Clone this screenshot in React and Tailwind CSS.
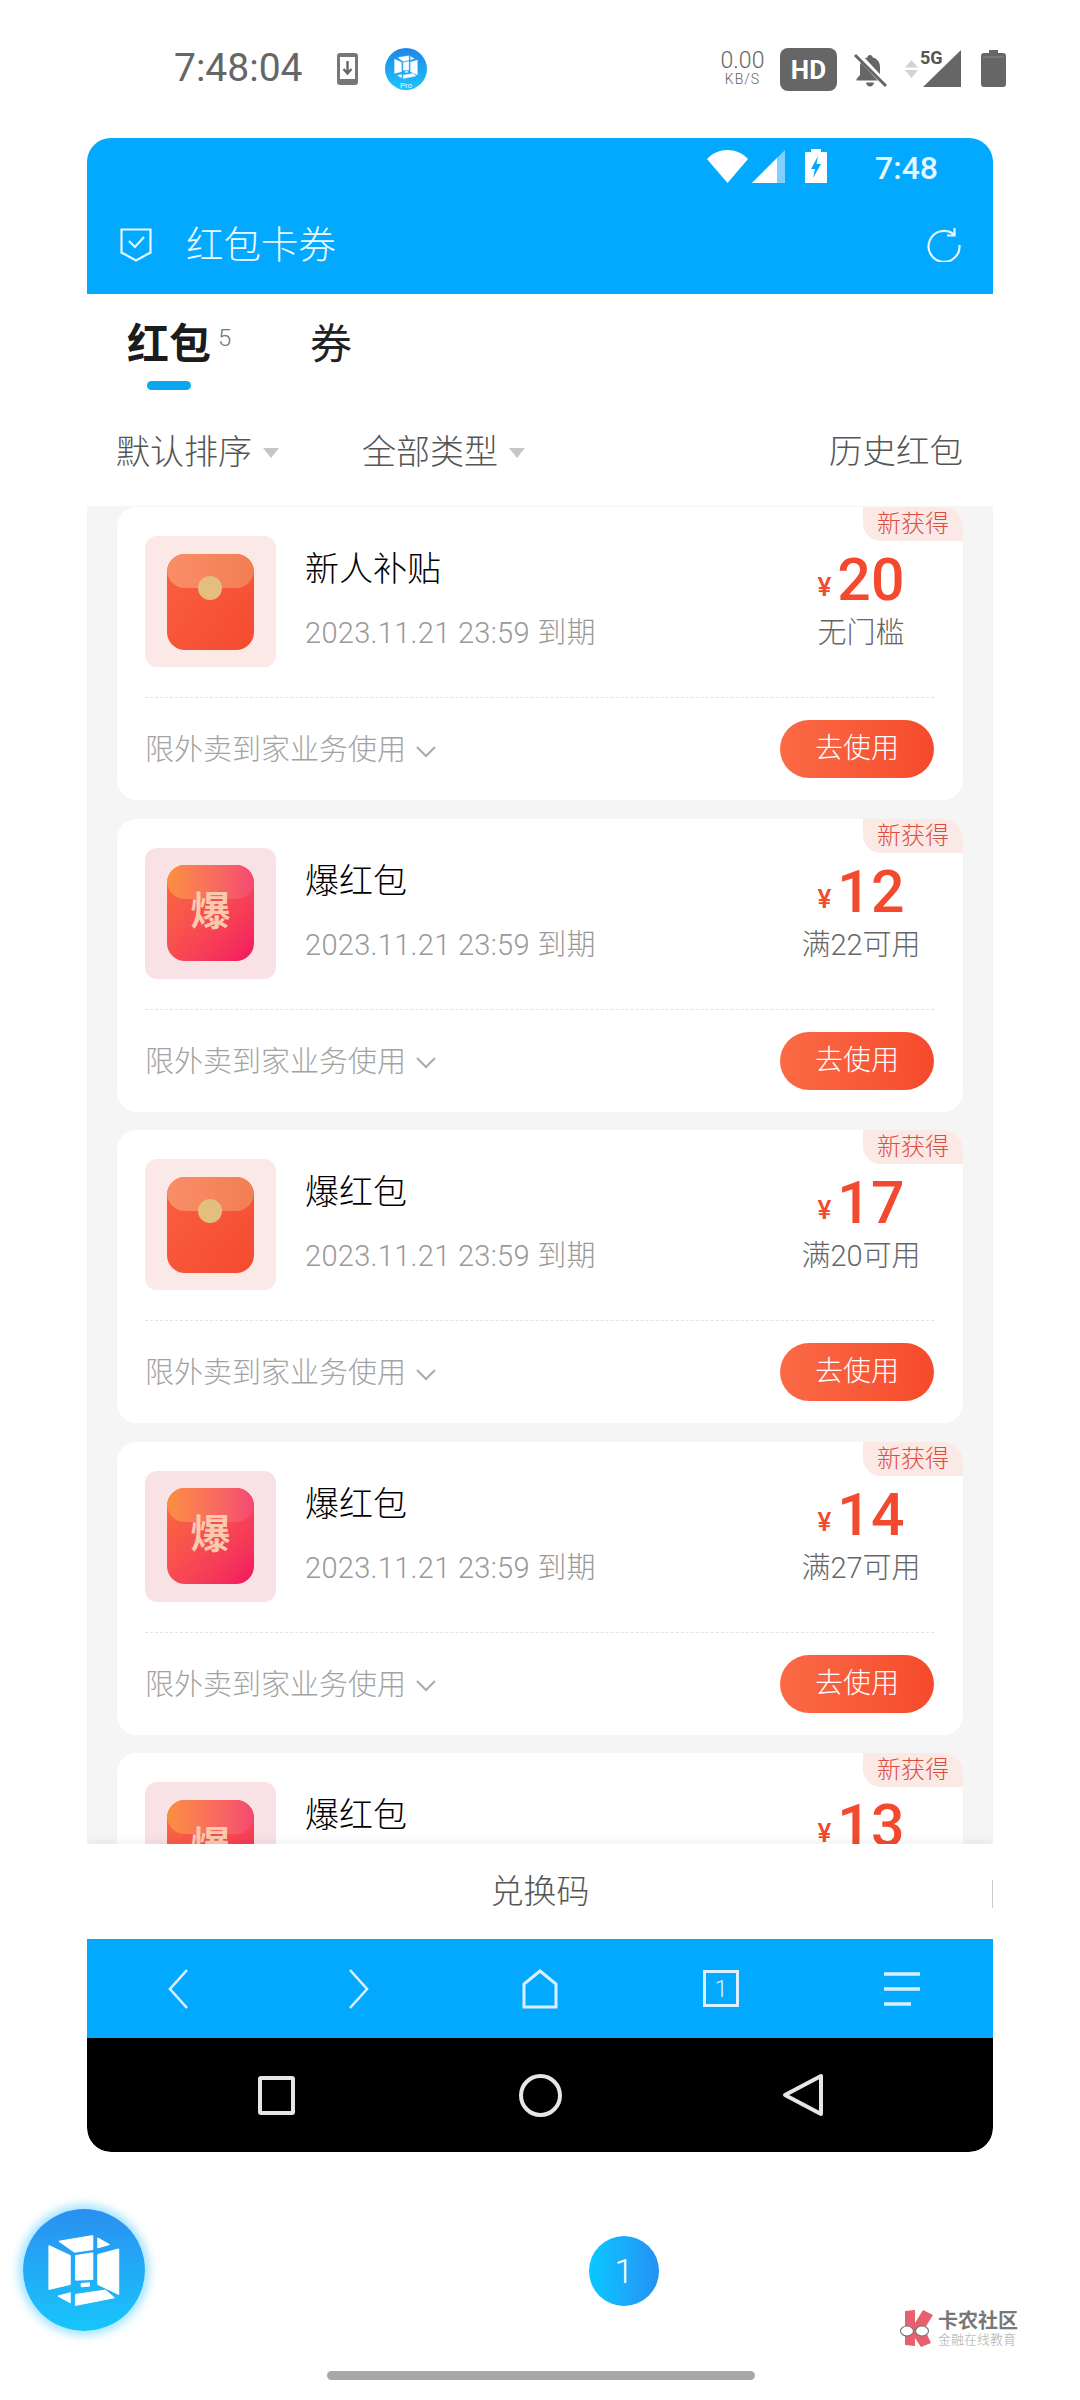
import React from 'react';

const cards = [
  { title: '新人补贴', price: '20', rule: '无门槛', type: 'red' },
  { title: '爆红包', price: '12', rule: '满22可用', type: 'bao' },
  { title: '爆红包', price: '17', rule: '满20可用', type: 'red' },
  { title: '爆红包', price: '14', rule: '满27可用', type: 'bao' },
  { title: '爆红包', price: '13', rule: '满25可用', type: 'bao' },
];

// cube logo, coordinates traced from the round launcher badge
function CubeMark({ className, fill = '#fff' }) {
  return (
    <svg viewBox="70 58 367 367" className={className} fill={fill} stroke={fill} strokeWidth="3" strokeLinejoin="round">
      <polygon points="148,168 212,198 212,285 148,300" />
      <polygon points="295,195 358,178 358,315 295,285" />
      <polygon points="228,198 280,190 280,270 228,272" />
      <polygon points="178,155 280,138 280,180 225,188" />
      <polygon points="295,145 330,165 295,175" />
      <polygon points="228,315 318,302 345,325 228,348" />
      <polygon points="175,320 212,310 212,340" />
      <polygon points="245,282 270,280 270,290 245,292" />
    </svg>
  );
}

function StatusBar() {
  return (
    <div className="h-[138px] flex items-start text-[#666]">
      <span className="ml-[174px] mt-[44px] w-[131px] text-[39px] leading-[48px] whitespace-nowrap">7:48:04</span>
      <svg viewBox="0 0 21 32" className="ml-[32px] mt-[53px] w-[21px] h-[32px]">
        <rect width="21" height="32" rx="3" fill="#777" />
        <rect x="3" y="4" width="15" height="22" fill="#fff" />
        <path d="M10.5 8v12M6.5 16l4 4.5 4-4.500" fill="none" stroke="#666" strokeWidth="2.4" />
      </svg>
      <div className="ml-[27px] mt-[48px] w-[42px] h-[42px] rounded-full bg-gradient-to-b from-[#1e86e8] to-[#1ec4fb] flex items-center justify-center relative">
        <CubeMark className="w-[40px] h-[40px] -mt-[5px]" />
        <span className="absolute bottom-0 text-[8px] leading-[9px] text-[#eaf8ff]">Pro</span>
      </div>
      <div className="ml-[293px] mt-[50px] w-[45px] flex flex-col items-center">
        <span className="text-[23px] leading-[22px] font-light">0.00</span>
        <span className="text-[14px] leading-[15px] tracking-[1px] font-light">KB/S</span>
      </div>
      <div className="ml-[15px] mt-[48px] w-[57px] h-[43px] rounded-[8px] bg-[#666] flex items-center justify-center">
        <span className="text-[26px] font-bold text-white leading-none">HD</span>
      </div>
      <svg viewBox="0 0 35 34" className="ml-[16px] mt-[53px] w-[35px] h-[34px]">
        <path d="M17 2c-1.5 0-2.6 1-2.7 2.4C9.3 5.600 7 9.500 7 14v8l-3.500 4v1.500h27V26L27 22v-8c0-4.500-2.300-8.400-7.300-9.600C19.600 3 18.500 2 17 2z" fill="#666" />
        <path d="M13 29.500c0 2.300 1.800 4 4 4s4-1.700 4-4z" fill="#666" />
        <path d="M3 0l30 32" stroke="#fff" strokeWidth="6" />
        <path d="M2 2l31 31" stroke="#666" strokeWidth="3" />
      </svg>
      <svg viewBox="0 0 15 18" className="ml-[16px] mt-[60px] w-[15px] h-[18px]">
        <path d="M7.500 0L14 7.500H1zM1 10h13L7.500 18z" fill="#d2d2d2" />
      </svg>
      <div className="relative mt-[50px] w-[42px] h-[37px]">
        <svg viewBox="0 0 38 37" className="absolute left-[4px] top-0 w-[38px] h-[37px]">
          <path d="M38 0v37H0z" fill="#666" />
        </svg>
        <span className="absolute left-[1px] -top-[2px] text-[18px] leading-[20px] font-bold text-[#555]">5G</span>
      </div>
      <svg viewBox="0 0 25 37" className="ml-[20px] mt-[50px] w-[25px] h-[37px]">
        <path d="M8 0h9v3h5a3 3 0 013 3v28a3 3 0 01-3 3H3a3 3 0 01-3-3V6a3 3 0 013-3h5z" fill="#666" />
        <path d="M2 7h21" stroke="#888" strokeWidth="1" />
      </svg>
    </div>
  );
}

function AppHeader() {
  return (
    <div className="h-[156px] bg-[#03a9ff] text-white flex flex-col shrink-0">
      <div className="h-[60px] flex items-start">
        <svg viewBox="0 0 41 33" className="ml-[620px] mt-[12px] w-[41px] h-[33px]">
          <path d="M0 9C11-3 30-3 41 9L20.500 33z" fill="#fff" />
        </svg>
        <svg viewBox="0 0 33 33" className="ml-[4px] mt-[12px] w-[33px] h-[33px]">
          <path d="M33 0v33H0z" fill="#7fd0ff" />
          <path d="M25 8v25H0z" fill="#fff" />
        </svg>
        <svg viewBox="0 0 22 34" className="ml-[20px] mt-[11px] w-[22px] h-[34px]">
          <path d="M6 0h10v3h6v31H0V3h6z" fill="#fff" />
          <path d="M13 7l-7 13h4l-2 9 8-14h-4.500z" fill="#03a9ff" />
        </svg>
        <span className="ml-[48px] mt-[9px] text-[32px] leading-[42px] font-medium text-[#e4f6ff]">7:48</span>
      </div>
      <div className="flex items-center h-[96px] pb-[3px]">
        <svg viewBox="0 0 32 34" className="ml-[33px] w-[32px] h-[34px]" fill="none" stroke="#e8f7ff" strokeWidth="2.200">
          <path d="M1.500 1.500h29v23L16 32.500 1.500 24.500z" />
          <path d="M9 13l6 6 9-10" />
        </svg>
        <span className="ml-[34px] text-[37.500px] leading-[48px] font-light text-[#effaff]">红包卡券</span>
        <svg viewBox="0 0 34 34" className="ml-auto mr-[32px] w-[34px] h-[34px]" fill="none" stroke="#e8f7ff" strokeWidth="2.200">
          <path d="M27 6.500A15.500 15.500 0 1032.500 17" />
          <path d="M27.500 0v7.500H20" />
        </svg>
      </div>
    </div>
  );
}

function Filter({ label, className }) {
  return (
    <div className={`flex items-center ${className}`}>
      <span className="text-[34px] leading-[44px] font-light text-[#555]">{label}</span>
      <svg viewBox="0 0 16 10" className="ml-[11px] mt-[2px] w-[16px] h-[10px]">
        <path d="M0 0h16L8 10z" fill="#c6c6c6" />
      </svg>
    </div>
  );
}

function CouponIcon({ type }) {
  const isBao = type === 'bao';
  return (
    <div className={`w-[131px] h-[131px] rounded-[12px] flex items-center justify-center shrink-0 ${isBao ? 'bg-[#f9e2e5]' : 'bg-[#fae9e6]'}`}>
      <div className={`relative w-[87px] h-[96px] rounded-[18px] overflow-hidden bg-gradient-to-br ${isBao ? 'from-[#fb6c3a] to-[#f30f60]' : 'from-[#fb6040] to-[#f44a30]'}`}>
        <div className={`absolute left-0 top-0 w-[87px] h-[34px] rounded-b-[18px] bg-gradient-to-r ${isBao ? 'from-[#fb8f3e] to-[#f44870]' : 'from-[#fa8e68] to-[#f27e52]'}`} />
        {isBao ? (
          <span className="absolute left-0 right-0 top-[22px] text-center text-[40px] leading-[50px] font-bold text-[#fbc9ad]">爆</span>
        ) : (
          <div className="absolute left-[31px] top-[22px] w-[24px] h-[24px] rounded-full bg-[#e2bf7d]" />
        )}
      </div>
    </div>
  );
}

function Card({ card }) {
  return (
    <div className="relative h-[293px] shrink-0 rounded-[20px] bg-white overflow-hidden pl-[28px] pr-[29px] pt-[29px]">
      <div className="absolute right-0 top-0 w-[100px] h-[34px] rounded-bl-[18px] bg-[#fbe9e6] flex items-center justify-center">
        <span className="text-[24px] leading-[30px] font-light text-[#dd4c40]">新获得</span>
      </div>
      <div className="flex items-start">
        <CouponIcon type={card.type} />
        <div className="ml-[29px] flex flex-col">
          <span className="mt-[11px] text-[34px] leading-[44px] font-light text-black">{card.title}</span>
          <span className="mt-[22px] text-[29px] leading-[40px] font-light tracking-[0.3px] text-[#999]">2023.11.21 23:59 到期</span>
        </div>
        <div className="ml-auto w-[146px] flex flex-col items-center">
          <div className="mt-[16px] h-[56px] flex items-end">
            <span className="text-[26px] leading-[42px] font-medium text-[#f2492f] mr-[6px]">¥</span>
            <span className="text-[59px] leading-[56px] font-medium text-[#f2492f]">{card.price}</span>
          </div>
          <span className="mt-[5px] text-[29px] leading-[40px] font-light text-[#666] whitespace-nowrap">{card.rule}</span>
        </div>
      </div>
      <div className="mt-[30px] border-t border-dashed border-[#e4e4e4]" />
      <div className="mt-[22px] flex items-center justify-between">
        <div className="flex items-center pt-[2px]">
          <span className="text-[29px] leading-[40px] font-light text-[#a3a3a3]">限外卖到家业务使用</span>
          <svg viewBox="0 0 20 12" className="ml-[10px] mt-[3px] w-[20px] h-[12px]" fill="none" stroke="#aaa" strokeWidth="2">
            <path d="M1 1l9 9 9-9" />
          </svg>
        </div>
        <div className="w-[154px] h-[58px] rounded-full bg-gradient-to-r from-[#fb6a45] to-[#f54a2c] flex items-center justify-center">
          <span className="text-[28px] leading-[36px] font-light text-white">去使用</span>
        </div>
      </div>
    </div>
  );
}

function BrowserBar() {
  const stroke = { fill: 'none', stroke: '#d9f1ff', strokeWidth: 2.6 };
  return (
    <div className="h-[99px] bg-[#03a9ff] grid grid-cols-5 shrink-0">
      <div className="flex items-center justify-center">
        <svg viewBox="0 0 22 40" className="w-[22px] h-[40px]" {...stroke}><path d="M20 1L3 20l17 19" /></svg>
      </div>
      <div className="flex items-center justify-center">
        <svg viewBox="0 0 22 40" className="w-[22px] h-[40px]" {...stroke}><path d="M2 1l17 19L2 39" /></svg>
      </div>
      <div className="flex items-center justify-center">
        <svg viewBox="0 0 36 40" className="w-[36px] h-[40px]" {...stroke}><path d="M2 38V15L18 2l16 13v23z" strokeWidth="3" /></svg>
      </div>
      <div className="flex items-center justify-center">
        <div className="w-[36px] h-[37px] border-[3px] border-[#d9f1ff] flex items-center justify-center">
          <span className="text-[24px] leading-[28px] font-light text-[#d9f1ff]">1</span>
        </div>
      </div>
      <div className="flex items-center justify-center">
        <svg viewBox="0 0 36 34" className="w-[36px] h-[34px]" {...stroke} strokeWidth="3.500">
          <path d="M0 2h36M0 17h36M0 32h27" />
        </svg>
      </div>
    </div>
  );
}

function SystemBar() {
  return (
    <div className="h-[114px] bg-black rounded-b-[24px] flex items-center shrink-0">
      <div className="ml-[171px] w-[37px] h-[39px] border-[4px] border-[#e6e6e6] rounded-[3px]" />
      <div className="ml-[224px] w-[43px] h-[43px] border-[4px] border-[#e6e6e6] rounded-full" />
      <svg viewBox="0 0 42 44" className="ml-[220px] w-[42px] h-[44px]" fill="none" stroke="#e6e6e6" strokeWidth="4" strokeLinejoin="round">
        <path d="M39 3v38L3 22z" />
      </svg>
    </div>
  );
}

function Watermark() {
  return (
    <div className="flex items-center mt-[101px] ml-[240px]">
      <svg viewBox="0 0 36 38" className="w-[36px] h-[38px]">
        <path d="M6 1l10-1v36l-10-1z" fill="#e8606e" />
        <path d="M16 13L24 0l10 5-8 13-4 4h-6z" fill="#e8606e" />
        <path d="M16 22l10-2 6 13-10 4-6-9z" fill="#e8606e" />
        <ellipse cx="8" cy="21" rx="6.500" ry="5" fill="#fff" stroke="#777" strokeWidth="1.200" />
        <ellipse cx="23" cy="21" rx="6.500" ry="5" fill="#fff" stroke="#777" strokeWidth="1.200" />
      </svg>
      <div className="ml-[3px] flex flex-col items-start">
        <span className="text-[20px] leading-[22px] font-bold text-[#777]">卡农社区</span>
        <span className="text-[13px] leading-[16px] font-light text-[#aaa]">金融在线教育</span>
      </div>
    </div>
  );
}

export default function App() {
  return (
    <div className="w-[1080px] h-[2400px] bg-white overflow-hidden flex flex-col font-['Roboto','Noto_Sans_CJK_SC',sans-serif]">
      <StatusBar />

      <div className="mx-[87px] h-[2014px] flex flex-col rounded-t-[24px] rounded-b-[24px] overflow-hidden">
        <AppHeader />

        <div className="h-[212px] bg-white shrink-0">
          <div className="flex items-start pl-[40px] pt-[26px]">
            <div className="w-[183px]">
              <div className="flex items-start">
                <span className="text-[42px] leading-[50px] font-bold text-[#1c1c1c]">红包</span>
                <span className="ml-[7px] mt-[3px] text-[24px] leading-[30px] font-light text-[#777]">5</span>
              </div>
              <div className="mt-[11px] ml-[20px] w-[44px] h-[9px] rounded-full bg-[#0aa6f0]" />
            </div>
            <span className="text-[42px] leading-[50px] font-normal text-[#222]">券</span>
          </div>
          <div className="flex items-center pl-[29px] pr-[30px] pt-[40px]">
            <Filter label="默认排序" className="w-[246px]" />
            <Filter label="全部类型" />
            <span className="ml-auto text-[33.500px] leading-[44px] font-light text-[#555]">历史红包</span>
          </div>
        </div>

        <div className="h-[1338px] bg-[#f5f5f5] overflow-hidden px-[30px] pt-[1px] flex flex-col gap-[18.500px] shrink-0">
          {cards.map((card, i) => (
            <Card key={i} card={card} />
          ))}
        </div>

        <div className="relative h-[95px] bg-white shadow-[0_-4px_8px_rgba(0,0,0,0.05)] flex items-center justify-center shrink-0">
          <span className="text-[33px] leading-[44px] font-light text-[#555]">兑换码</span>
          <div className="absolute right-0 top-[36px] w-[1px] h-[28px] bg-[#ccc]" />
        </div>

        <BrowserBar />
        <SystemBar />
      </div>

      <div className="flex items-start pl-[23px] pt-[57px]">
        <div className="w-[122px] h-[122px] rounded-full bg-gradient-to-b from-[#2a8ff0] to-[#16c6fb] shadow-[0_0_10px_4px_rgba(40,190,255,0.45)] shrink-0">
          <CubeMark className="w-[122px] h-[122px]" />
        </div>
        <div className="ml-[444px] mt-[27px] w-[70px] h-[70px] rounded-full bg-gradient-to-r from-[#06c8ff] to-[#2490f5] flex items-center justify-center shrink-0">
          <span className="text-[34px] leading-[40px] font-light text-white">1</span>
        </div>
        <Watermark />
      </div>

      <div className="ml-[327px] mt-[23px] w-[428px] h-[9px] rounded-full bg-[#a8a8a8]" />
    </div>
  );
}
